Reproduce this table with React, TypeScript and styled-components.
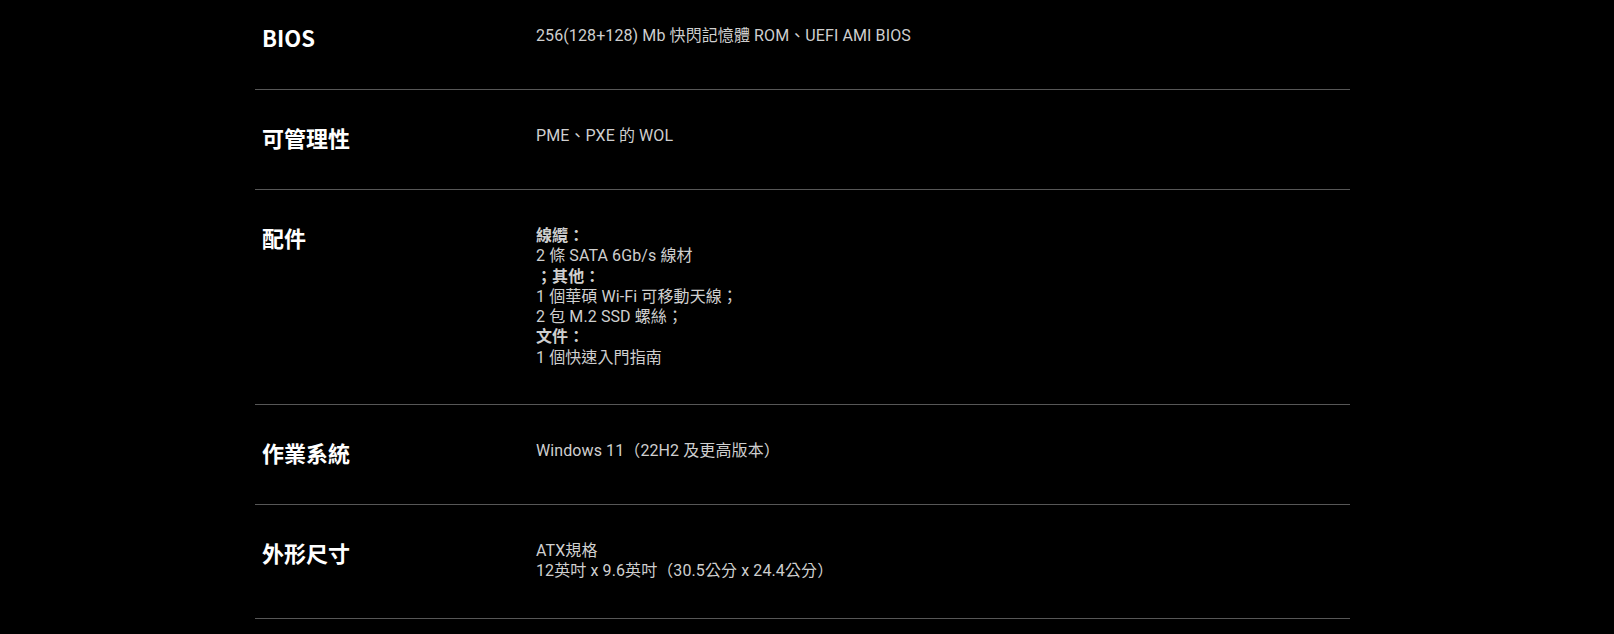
import React from 'react'
import styled, {createGlobalStyle} from 'styled-components'

// ── Global ──

const GlobalStyle = createGlobalStyle`
  html, body {
    margin: 0;
    padding: 0;
    background: #000;
  }
  body {
    overflow: hidden;
    font-family: Roboto, 'Noto Sans CJK TC', sans-serif;
  }
`

// ── Styled Components ──

const Page = styled.div`
  background: #000;
  min-height: 634px;
  padding-left: 255px;
`

const SpecList = styled.div`
  width: 1095px;
  display: flex;
  flex-direction: column;
  margin-top: -10px;
`

const SpecRow = styled.div`
  display: grid;
  grid-template-columns: 281px 1fr;
  align-items: start;
  padding: 36px 0 36px;
  border-bottom: 1px solid #575757;
`

const SpecLabel = styled.div`
  padding-left: 7px;
  margin-bottom: 5px;
  font-family: 'Noto Sans CJK TC', 'Noto Sans', sans-serif;
  font-size: 22px;
  font-weight: 700;
  line-height: 22px;
  color: #fff;
`

const SpecValue = styled.div`
  font-family: Roboto, 'Noto Sans CJK TC', sans-serif;
  font-size: 16px;
  letter-spacing: 0.1px;
  line-height: 20.3px;
  color: #cfcfcf;
`

const ValueLine = styled.div<{$bold?: boolean}>`
  font-weight: ${(p) => (p.$bold ? 700 : 400)};
`

// ── Data ──

interface Line {
  text: string
  bold?: boolean
}

interface Spec {
  label: string
  lines: Line[]
}

const SPECS: Spec[] = [
  {label: 'BIOS', lines: [{text: '256(128+128) Mb 快閃記憶體 ROM、UEFI AMI BIOS'}]},
  {label: '可管理性', lines: [{text: 'PME、PXE 的 WOL'}]},
  {
    label: '配件',
    lines: [
      {text: '線纜：', bold: true},
      {text: '2 條 SATA 6Gb/s 線材'},
      {text: '；其他：', bold: true},
      {text: '1 個華碩 Wi-Fi 可移動天線；'},
      {text: '2 包 M.2 SSD 螺絲；'},
      {text: '文件：', bold: true},
      {text: '1 個快速入門指南'},
    ],
  },
  {label: '作業系統', lines: [{text: 'Windows 11（22H2 及更高版本）'}]},
  {
    label: '外形尺寸',
    lines: [{text: 'ATX規格'}, {text: '12英吋 x 9.6英吋（30.5公分 x 24.4公分）'}],
  },
]

// ── Component ──

export default function App() {
  return (
    <>
      <GlobalStyle />
      <Page>
        <SpecList>
          {SPECS.map((spec) => (
            <SpecRow key={spec.label}>
              <SpecLabel>{spec.label}</SpecLabel>
              <SpecValue>
                {spec.lines.map((line, i) => (
                  <ValueLine key={i} $bold={line.bold}>
                    {line.text}
                  </ValueLine>
                ))}
              </SpecValue>
            </SpecRow>
          ))}
        </SpecList>
      </Page>
    </>
  )
}
